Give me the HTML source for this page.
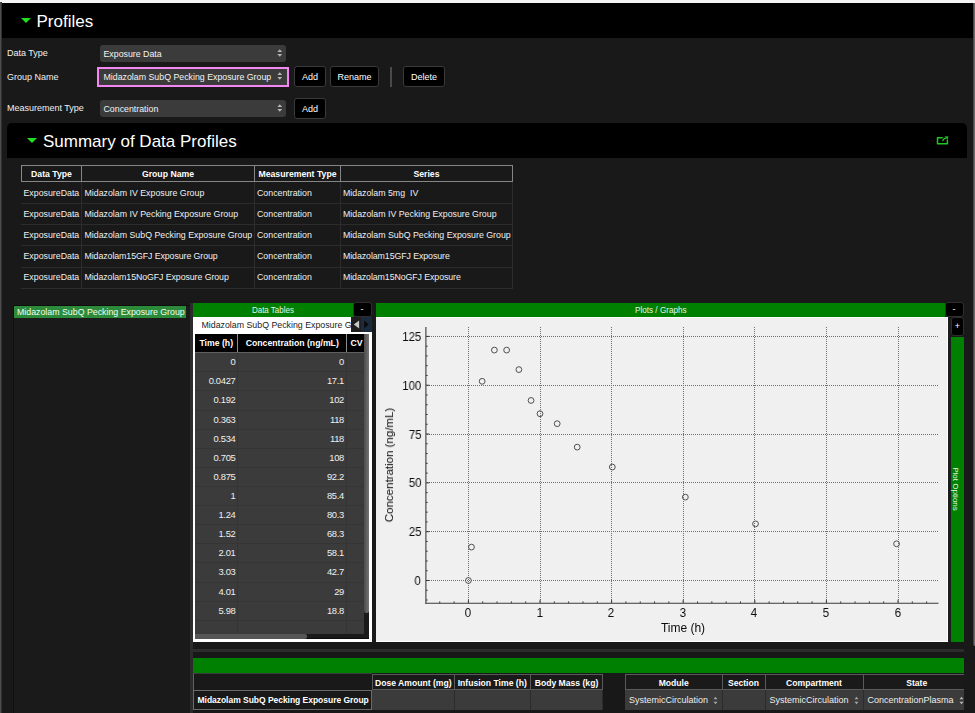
<!DOCTYPE html>
<html><head><meta charset="utf-8"><title>Profiles</title>
<style>
html,body{margin:0;padding:0;}
body{width:975px;height:713px;overflow:hidden;background:#191919;position:relative;font-family:"Liberation Sans",sans-serif;font-size:9px;color:#f2f2f2;}
div,span{position:absolute;box-sizing:border-box;white-space:nowrap;}
.hdr{background:#000;}
.h1{font-size:17px;color:#fff;line-height:20px;}
.tri{width:0;height:0;border-left:5px solid transparent;border-right:5px solid transparent;border-top:5px solid #1fe01f;}
.lab{left:7px;font-size:9px;line-height:12px;color:#f0f0f0;}
.sel{left:100px;width:186px;height:17px;background:#3b3b3b;border-radius:3px;line-height:18.4px;padding-left:3.5px;font-size:8.8px;color:#f4f4f4;}
.arr{right:3.7px;top:4.3px;width:5.5px;height:8px;}
.btn{background:#000;border:1px solid #3a3a3a;border-radius:3px;height:21px;line-height:20.5px;text-align:center;font-size:9px;color:#fff;}
.sth{top:165px;height:17px;border:1px solid #858585;border-left:none;line-height:16.5px;text-align:center;font-weight:bold;font-size:8.7px;color:#fff;background:#191919;}
.sr{left:0;width:975px;}
.sr span{top:0;font-size:8.8px;color:#f0f0f0;}
.svl{width:1px;background:#2c2c2c;top:182px;height:106px;}
.shl{height:1px;background:#2c2c2c;left:21px;width:492px;}
.green{background:#008000;}
.gh{font-size:8.7px;line-height:14.6px;text-align:center;color:#e8f5e8;}
.mb{background:#000;border:1px solid #2e2e2e;border-radius:3px;color:#fff;text-align:center;font-size:9px;}
.dr{left:195px;width:170px;height:19px;line-height:19.4px;font-size:9.4px;letter-spacing:-0.3px;color:#f0f0f0;}
.dr .c1{right:129.5px;top:0;}
.dr .c2{right:21px;top:0;}
.dd{left:195px;width:169px;height:1px;background:#353535;}
.dth{top:334px;height:18px;line-height:18.6px;font-weight:bold;color:#fff;font-size:8.7px;text-align:center;}
.yl{will-change:transform;right:553.8px;font-size:12.2px;line-height:14px;color:#0c0c0c;text-align:right;transform:scaleX(0.94);transform-origin:100% 50%;}
.xl{will-change:transform;top:606px;width:40px;text-align:center;font-size:12.2px;line-height:14px;color:#0c0c0c;transform:scaleX(0.94);}
.bth{top:673.5px;height:16.5px;background:#1a1a1a;border:1px solid #5a5a5a;border-left:none;line-height:16.5px;text-align:center;font-weight:bold;font-size:8.6px;color:#fff;}
.bc{top:690px;height:19.5px;background:#3b3b3b;line-height:21px;font-size:9px;color:#eee;padding-left:4px;border-right:1px solid #2c2c2c;}
</style></head><body>
<!-- top white strip -->
<div style="left:0;top:0;width:975px;height:2.5px;background:#f4f4f4"></div>
<div style="left:0;top:2px;width:2px;height:711px;background:linear-gradient(90deg,#5c5c5c,#202020)"></div>
<!-- Profiles header -->
<div class="hdr" style="left:2px;top:2.5px;width:971px;height:35px"></div>
<div class="tri" style="left:20.5px;top:17.5px"></div>
<div class="h1" style="left:36.5px;top:11.5px">Profiles</div>
<!-- right scrollbar -->
<div style="left:973px;top:2.5px;width:2px;height:643px;background:linear-gradient(90deg,#3a3a3a,#7a7a7a);border-radius:0 0 0 2px"></div>

<div class="lab" style="top:47px">Data Type</div>
<div class="lab" style="top:70.5px">Group Name</div>
<div class="lab" style="top:102px">Measurement Type</div>

<div class="sel" style="top:45px">Exposure Data<svg class="arr" style="position:absolute" viewBox="0 0 5.5 8"><path d="M0.3 3 L2.75 0.2 L5.2 3 Z M0.3 5 L2.75 7.8 L5.2 5 Z" fill="#b4b4b4"/></svg></div>
<div style="left:96.5px;top:67px;width:192px;height:20px;border:2px solid #f486f4;background:#3b3b3b"></div>
<div class="sel" style="top:67.8px;background:transparent">Midazolam SubQ Pecking Exposure Group<svg class="arr" style="position:absolute" viewBox="0 0 5.5 8"><path d="M0.3 3 L2.75 0.2 L5.2 3 Z M0.3 5 L2.75 7.8 L5.2 5 Z" fill="#b4b4b4"/></svg></div>
<div class="sel" style="top:100px">Concentration<svg class="arr" style="position:absolute" viewBox="0 0 5.5 8"><path d="M0.3 3 L2.75 0.2 L5.2 3 Z M0.3 5 L2.75 7.8 L5.2 5 Z" fill="#b4b4b4"/></svg></div>

<div class="btn" style="left:294px;top:66px;width:32px">Add</div>
<div class="btn" style="left:330px;top:66px;width:49px">Rename</div>
<div style="left:390px;top:66.5px;width:2px;height:20px;background:#4a4a4a"></div>
<div class="btn" style="left:403px;top:66px;width:42px">Delete</div>
<div class="btn" style="left:294px;top:98px;width:32px">Add</div>

<!-- Summary header -->
<div class="hdr" style="left:7px;top:123px;width:960px;height:35px;border-radius:5px 5px 0 0"></div>
<div class="tri" style="left:27px;top:138px"></div>
<div class="h1" style="left:43px;top:132px">Summary of Data Profiles</div>
<svg style="position:absolute;left:935px;top:135px" width="15" height="11" viewBox="935 135 15 11"><path d="M942.2 137.7 H937.5 V143.7 H947.4 V140.4" fill="none" stroke="#1fc81f" stroke-width="1.5" stroke-linejoin="round" stroke-linecap="round"/><path d="M942.7 141.2 Q943 138.7 946 138.2" fill="none" stroke="#1fc81f" stroke-width="1.2"/><path d="M944.6 136.3 L948.3 136.5 L947.8 139.9 Z" fill="#1fc81f"/></svg>

<!-- Summary table -->
<div class="sth" style="left:21px;width:61px;border-left:1px solid #8a8a8a">Data Type</div>
<div class="sth" style="left:82px;width:173px">Group Name</div>
<div class="sth" style="left:255px;width:86px">Measurement Type</div>
<div class="sth" style="left:341px;width:172px">Series</div>
<div class="sr" style="top:182.6px;height:21.4px;line-height:21.4px"><span style="left:23.5px">ExposureData</span><span style="left:84.5px;">Midazolam IV Exposure Group</span><span style="left:257px">Concentration</span><span style="left:343px;">Midazolam 5mg&nbsp; IV</span></div>
<div class="sr" style="top:203.6px;height:21.4px;line-height:21.4px"><span style="left:23.5px">ExposureData</span><span style="left:84.5px;">Midazolam IV Pecking Exposure Group</span><span style="left:257px">Concentration</span><span style="left:343px;">Midazolam IV Pecking Exposure Group</span></div>
<div class="sr" style="top:225px;height:21.4px;line-height:21.4px"><span style="left:23.5px">ExposureData</span><span style="left:84.5px;">Midazolam SubQ Pecking Exposure Group</span><span style="left:257px">Concentration</span><span style="left:343px;">Midazolam SubQ Pecking Exposure Group</span></div>
<div class="sr" style="top:246.3px;height:21.4px;line-height:21.4px"><span style="left:23.5px">ExposureData</span><span style="left:84.5px;letter-spacing:-0.08px;">Midazolam15GFJ Exposure Group</span><span style="left:257px">Concentration</span><span style="left:343px;letter-spacing:-0.08px;">Midazolam15GFJ Exposure</span></div>
<div class="sr" style="top:267.2px;height:21.4px;line-height:21.4px"><span style="left:23.5px">ExposureData</span><span style="left:84.5px;letter-spacing:-0.08px;">Midazolam15NoGFJ Exposure Group</span><span style="left:257px">Concentration</span><span style="left:343px;letter-spacing:-0.08px;">Midazolam15NoGFJ Exposure</span></div>
<div class="svl" style="left:81px"></div><div class="svl" style="left:254px"></div><div class="svl" style="left:340px"></div><div class="svl" style="left:512px"></div>
<div class="shl" style="top:203px"></div><div class="shl" style="top:224px"></div><div class="shl" style="top:245px"></div><div class="shl" style="top:267px"></div><div class="shl" style="top:288px"></div>

<!-- left list panel -->
<div style="left:13px;top:305px;width:177px;height:409px;background:#1a1a1a;border-left:1px solid #0f0f0f;border-top:1px solid #0f0f0f"></div>
<div style="left:190px;top:303px;width:3px;height:410px;background:#2b2b2b"></div>
<div style="left:14px;top:306px;width:172px;height:12px;background:#2b8b3a;line-height:13.4px;padding-left:3px;font-size:8.8px;color:#f4fff4">Midazolam SubQ Pecking Exposure Group</div>

<!-- Data tables panel -->
<div style="left:193px;top:317px;width:179px;height:325px;background:#fff"></div>
<div class="green gh" style="left:193px;top:303px;width:161px;height:14px"><span style="position:static;display:inline-block;transform:scaleX(0.92) translateX(-1px)">Data Tables</span></div>
<div class="mb" style="left:353px;top:302px;width:19px;height:15px;line-height:13px;text-indent:-1px">-</div>
<div style="left:201.5px;top:318px;width:149px;height:15px;overflow:hidden;line-height:15px;font-size:8.8px;color:#222">Midazolam SubQ Pecking Exposure Group</div>
<div style="left:350.5px;top:317px;width:10.5px;height:15px;background:#1e1e1e"></div>
<div style="left:361px;top:317px;width:11px;height:15px;background:#1b2a3c"></div>
<svg style="position:absolute;left:350px;top:317px" width="22" height="15" viewBox="350 317 22 15"><path d="M359.1 320.6 L353.8 324.5 L359.1 328.4 Z" fill="#c8c8c8"/><path d="M364.2 320.6 L368.7 324.5 L364.2 328.4 Z" fill="#0a0a0a"/></svg>
<!-- table body -->
<div style="left:195px;top:334px;width:174px;height:305.3px;background:#000"></div>
<div style="left:195px;top:352px;width:169px;height:282px;background:#3b3b3b"></div>
<div class="dth" style="left:195px;width:42.5px">Time (h)</div>
<div class="dth" style="left:238px;width:108.5px">Concentration (ng/mL)</div>
<div class="dth" style="left:347px;width:18px;text-align:left;padding-left:3.5px;overflow:hidden">CV</div>
<div style="left:237px;top:334px;width:1px;height:18px;background:#8a8a8a"></div>
<div style="left:346px;top:334px;width:1px;height:18px;background:#8a8a8a"></div><div style="left:195px;top:352px;width:169px;height:1px;background:#606060"></div>
<div class="dd" style="top:371px"></div>
<div class="dd" style="top:390px"></div>
<div class="dd" style="top:410px"></div>
<div class="dd" style="top:429px"></div>
<div class="dd" style="top:448px"></div>
<div class="dd" style="top:467px"></div>
<div class="dd" style="top:486px"></div>
<div class="dd" style="top:505px"></div>
<div class="dd" style="top:524px"></div>
<div class="dd" style="top:543px"></div>
<div class="dd" style="top:562px"></div>
<div class="dd" style="top:582px"></div>
<div class="dd" style="top:601px"></div>
<div class="dd" style="top:620px"></div>
<div style="left:237px;top:353px;width:1px;height:281px;background:#343434"></div>
<div style="left:346px;top:353px;width:1px;height:281px;background:#343434"></div>
<div class="dr" style="top:352px"><span class="c1">0</span><span class="c2">0</span></div>
<div class="dr" style="top:371px"><span class="c1">0.0427</span><span class="c2">17.1</span></div>
<div class="dr" style="top:390px"><span class="c1">0.192</span><span class="c2">102</span></div>
<div class="dr" style="top:410px"><span class="c1">0.363</span><span class="c2">118</span></div>
<div class="dr" style="top:429px"><span class="c1">0.534</span><span class="c2">118</span></div>
<div class="dr" style="top:448px"><span class="c1">0.705</span><span class="c2">108</span></div>
<div class="dr" style="top:467px"><span class="c1">0.875</span><span class="c2">92.2</span></div>
<div class="dr" style="top:486px"><span class="c1">1</span><span class="c2">85.4</span></div>
<div class="dr" style="top:505px"><span class="c1">1.24</span><span class="c2">80.3</span></div>
<div class="dr" style="top:524px"><span class="c1">1.52</span><span class="c2">68.3</span></div>
<div class="dr" style="top:543px"><span class="c1">2.01</span><span class="c2">58.1</span></div>
<div class="dr" style="top:562px"><span class="c1">3.03</span><span class="c2">42.7</span></div>
<div class="dr" style="top:582px"><span class="c1">4.01</span><span class="c2">29</span></div>
<div class="dr" style="top:601px"><span class="c1">5.98</span><span class="c2">18.8</span></div>
<!-- scrollbars -->
<div style="left:364px;top:334px;width:5px;height:300px;background:#1a1a1a"></div>
<div style="left:364px;top:334px;width:5px;height:278.5px;border-radius:0 0 2px 2px;background:linear-gradient(90deg,#4c4c4c,#747474)"></div>

<div style="left:195px;top:634px;width:174px;height:5.3px;background:#1a1a1a;border-bottom:1px solid #0c0c0c"></div><div style="left:195px;top:634px;width:112px;height:4.5px;background:#565656;border-radius:0 2px 2px 0"></div>

<!-- gap -->
<div style="left:372px;top:302px;width:4px;height:340px;background:#1a1a1a"></div>
<!-- Plot panel -->
<div style="left:376px;top:317px;width:572px;height:325px;background:#f0f0f0;border-top:1px solid #fff;border-right:1px solid #fff;border-bottom:1px solid #fff"></div>
<div class="green gh" style="left:376px;top:303px;width:569px;height:14px"><span style="position:static;display:inline-block;transform:scaleX(0.94) translateX(0.3px)">Plots / Graphs</span></div>
<div class="mb" style="left:945px;top:302px;width:19px;height:15px;line-height:13px;text-indent:-1px">-</div>
<div style="left:948px;top:317px;width:3px;height:325px;background:#1c1c1c"></div>
<div class="mb" style="left:951px;top:317px;width:13px;height:19px;line-height:17px;font-size:9px">+</div>
<div class="green" style="left:951px;top:336.5px;width:13px;height:305.5px"></div>
<div style="left:954.8px;top:489.3px;width:0;height:0;font-size:8px;color:#eaf6e0"><div style="left:0;top:0;transform:translate(-50%,-50%) rotate(90deg);line-height:10px">Plot Options</div></div>
<svg width="975" height="713" style="position:absolute;left:0;top:0">
<line x1="427" y1="580.5" x2="938" y2="580.5" stroke="#6e6e6e" stroke-width="1" stroke-dasharray="1,1" shape-rendering="crispEdges"/>
<line x1="427" y1="531.5" x2="938" y2="531.5" stroke="#6e6e6e" stroke-width="1" stroke-dasharray="1,1" shape-rendering="crispEdges"/>
<line x1="427" y1="482.5" x2="938" y2="482.5" stroke="#6e6e6e" stroke-width="1" stroke-dasharray="1,1" shape-rendering="crispEdges"/>
<line x1="427" y1="434.5" x2="938" y2="434.5" stroke="#6e6e6e" stroke-width="1" stroke-dasharray="1,1" shape-rendering="crispEdges"/>
<line x1="427" y1="385.5" x2="938" y2="385.5" stroke="#6e6e6e" stroke-width="1" stroke-dasharray="1,1" shape-rendering="crispEdges"/>
<line x1="427" y1="336.5" x2="938" y2="336.5" stroke="#6e6e6e" stroke-width="1" stroke-dasharray="1,1" shape-rendering="crispEdges"/>
<line x1="468.5" y1="327" x2="468.5" y2="603" stroke="#6e6e6e" stroke-width="1" stroke-dasharray="1,1" shape-rendering="crispEdges"/>
<line x1="540.5" y1="327" x2="540.5" y2="603" stroke="#6e6e6e" stroke-width="1" stroke-dasharray="1,1" shape-rendering="crispEdges"/>
<line x1="611.5" y1="327" x2="611.5" y2="603" stroke="#6e6e6e" stroke-width="1" stroke-dasharray="1,1" shape-rendering="crispEdges"/>
<line x1="683.5" y1="327" x2="683.5" y2="603" stroke="#6e6e6e" stroke-width="1" stroke-dasharray="1,1" shape-rendering="crispEdges"/>
<line x1="754.5" y1="327" x2="754.5" y2="603" stroke="#6e6e6e" stroke-width="1" stroke-dasharray="1,1" shape-rendering="crispEdges"/>
<line x1="826.5" y1="327" x2="826.5" y2="603" stroke="#6e6e6e" stroke-width="1" stroke-dasharray="1,1" shape-rendering="crispEdges"/>
<line x1="898.5" y1="327" x2="898.5" y2="603" stroke="#6e6e6e" stroke-width="1" stroke-dasharray="1,1" shape-rendering="crispEdges"/>
<line x1="425.9" y1="327" x2="425.9" y2="603.7" stroke="#3a3a3a" stroke-width="1.1"/>
<line x1="425.4" y1="603.2" x2="938.5" y2="603.2" stroke="#3a3a3a" stroke-width="1.1"/>
<line x1="425.9" y1="600.03" x2="427.7" y2="600.03" stroke="#3a3a3a" stroke-width="1"/>
<line x1="425.9" y1="590.26" x2="427.7" y2="590.26" stroke="#3a3a3a" stroke-width="1"/>
<line x1="425.9" y1="580.50" x2="429.4" y2="580.50" stroke="#3a3a3a" stroke-width="1"/>
<line x1="425.9" y1="570.74" x2="427.7" y2="570.74" stroke="#3a3a3a" stroke-width="1"/>
<line x1="425.9" y1="560.97" x2="427.7" y2="560.97" stroke="#3a3a3a" stroke-width="1"/>
<line x1="425.9" y1="551.21" x2="427.7" y2="551.21" stroke="#3a3a3a" stroke-width="1"/>
<line x1="425.9" y1="541.44" x2="427.7" y2="541.44" stroke="#3a3a3a" stroke-width="1"/>
<line x1="425.9" y1="531.68" x2="429.4" y2="531.68" stroke="#3a3a3a" stroke-width="1"/>
<line x1="425.9" y1="521.92" x2="427.7" y2="521.92" stroke="#3a3a3a" stroke-width="1"/>
<line x1="425.9" y1="512.15" x2="427.7" y2="512.15" stroke="#3a3a3a" stroke-width="1"/>
<line x1="425.9" y1="502.39" x2="427.7" y2="502.39" stroke="#3a3a3a" stroke-width="1"/>
<line x1="425.9" y1="492.62" x2="427.7" y2="492.62" stroke="#3a3a3a" stroke-width="1"/>
<line x1="425.9" y1="482.86" x2="429.4" y2="482.86" stroke="#3a3a3a" stroke-width="1"/>
<line x1="425.9" y1="473.10" x2="427.7" y2="473.10" stroke="#3a3a3a" stroke-width="1"/>
<line x1="425.9" y1="463.33" x2="427.7" y2="463.33" stroke="#3a3a3a" stroke-width="1"/>
<line x1="425.9" y1="453.57" x2="427.7" y2="453.57" stroke="#3a3a3a" stroke-width="1"/>
<line x1="425.9" y1="443.80" x2="427.7" y2="443.80" stroke="#3a3a3a" stroke-width="1"/>
<line x1="425.9" y1="434.04" x2="429.4" y2="434.04" stroke="#3a3a3a" stroke-width="1"/>
<line x1="425.9" y1="424.28" x2="427.7" y2="424.28" stroke="#3a3a3a" stroke-width="1"/>
<line x1="425.9" y1="414.51" x2="427.7" y2="414.51" stroke="#3a3a3a" stroke-width="1"/>
<line x1="425.9" y1="404.75" x2="427.7" y2="404.75" stroke="#3a3a3a" stroke-width="1"/>
<line x1="425.9" y1="394.98" x2="427.7" y2="394.98" stroke="#3a3a3a" stroke-width="1"/>
<line x1="425.9" y1="385.22" x2="429.4" y2="385.22" stroke="#3a3a3a" stroke-width="1"/>
<line x1="425.9" y1="375.46" x2="427.7" y2="375.46" stroke="#3a3a3a" stroke-width="1"/>
<line x1="425.9" y1="365.69" x2="427.7" y2="365.69" stroke="#3a3a3a" stroke-width="1"/>
<line x1="425.9" y1="355.93" x2="427.7" y2="355.93" stroke="#3a3a3a" stroke-width="1"/>
<line x1="425.9" y1="346.16" x2="427.7" y2="346.16" stroke="#3a3a3a" stroke-width="1"/>
<line x1="425.9" y1="336.40" x2="429.4" y2="336.40" stroke="#3a3a3a" stroke-width="1"/>
<line x1="439.76" y1="603.2" x2="439.76" y2="601.4000000000001" stroke="#3a3a3a" stroke-width="1"/>
<line x1="454.08" y1="603.2" x2="454.08" y2="601.4000000000001" stroke="#3a3a3a" stroke-width="1"/>
<line x1="468.40" y1="603.2" x2="468.40" y2="599.7" stroke="#3a3a3a" stroke-width="1"/>
<line x1="482.72" y1="603.2" x2="482.72" y2="601.4000000000001" stroke="#3a3a3a" stroke-width="1"/>
<line x1="497.04" y1="603.2" x2="497.04" y2="601.4000000000001" stroke="#3a3a3a" stroke-width="1"/>
<line x1="511.36" y1="603.2" x2="511.36" y2="601.4000000000001" stroke="#3a3a3a" stroke-width="1"/>
<line x1="525.68" y1="603.2" x2="525.68" y2="601.4000000000001" stroke="#3a3a3a" stroke-width="1"/>
<line x1="540.00" y1="603.2" x2="540.00" y2="599.7" stroke="#3a3a3a" stroke-width="1"/>
<line x1="554.32" y1="603.2" x2="554.32" y2="601.4000000000001" stroke="#3a3a3a" stroke-width="1"/>
<line x1="568.64" y1="603.2" x2="568.64" y2="601.4000000000001" stroke="#3a3a3a" stroke-width="1"/>
<line x1="582.96" y1="603.2" x2="582.96" y2="601.4000000000001" stroke="#3a3a3a" stroke-width="1"/>
<line x1="597.28" y1="603.2" x2="597.28" y2="601.4000000000001" stroke="#3a3a3a" stroke-width="1"/>
<line x1="611.60" y1="603.2" x2="611.60" y2="599.7" stroke="#3a3a3a" stroke-width="1"/>
<line x1="625.92" y1="603.2" x2="625.92" y2="601.4000000000001" stroke="#3a3a3a" stroke-width="1"/>
<line x1="640.24" y1="603.2" x2="640.24" y2="601.4000000000001" stroke="#3a3a3a" stroke-width="1"/>
<line x1="654.56" y1="603.2" x2="654.56" y2="601.4000000000001" stroke="#3a3a3a" stroke-width="1"/>
<line x1="668.88" y1="603.2" x2="668.88" y2="601.4000000000001" stroke="#3a3a3a" stroke-width="1"/>
<line x1="683.20" y1="603.2" x2="683.20" y2="599.7" stroke="#3a3a3a" stroke-width="1"/>
<line x1="697.52" y1="603.2" x2="697.52" y2="601.4000000000001" stroke="#3a3a3a" stroke-width="1"/>
<line x1="711.84" y1="603.2" x2="711.84" y2="601.4000000000001" stroke="#3a3a3a" stroke-width="1"/>
<line x1="726.16" y1="603.2" x2="726.16" y2="601.4000000000001" stroke="#3a3a3a" stroke-width="1"/>
<line x1="740.48" y1="603.2" x2="740.48" y2="601.4000000000001" stroke="#3a3a3a" stroke-width="1"/>
<line x1="754.80" y1="603.2" x2="754.80" y2="599.7" stroke="#3a3a3a" stroke-width="1"/>
<line x1="769.12" y1="603.2" x2="769.12" y2="601.4000000000001" stroke="#3a3a3a" stroke-width="1"/>
<line x1="783.44" y1="603.2" x2="783.44" y2="601.4000000000001" stroke="#3a3a3a" stroke-width="1"/>
<line x1="797.76" y1="603.2" x2="797.76" y2="601.4000000000001" stroke="#3a3a3a" stroke-width="1"/>
<line x1="812.08" y1="603.2" x2="812.08" y2="601.4000000000001" stroke="#3a3a3a" stroke-width="1"/>
<line x1="826.40" y1="603.2" x2="826.40" y2="599.7" stroke="#3a3a3a" stroke-width="1"/>
<line x1="840.72" y1="603.2" x2="840.72" y2="601.4000000000001" stroke="#3a3a3a" stroke-width="1"/>
<line x1="855.04" y1="603.2" x2="855.04" y2="601.4000000000001" stroke="#3a3a3a" stroke-width="1"/>
<line x1="869.36" y1="603.2" x2="869.36" y2="601.4000000000001" stroke="#3a3a3a" stroke-width="1"/>
<line x1="883.68" y1="603.2" x2="883.68" y2="601.4000000000001" stroke="#3a3a3a" stroke-width="1"/>
<line x1="898.00" y1="603.2" x2="898.00" y2="599.7" stroke="#3a3a3a" stroke-width="1"/>
<line x1="912.32" y1="603.2" x2="912.32" y2="601.4000000000001" stroke="#3a3a3a" stroke-width="1"/>
<line x1="926.64" y1="603.2" x2="926.64" y2="601.4000000000001" stroke="#3a3a3a" stroke-width="1"/>
<circle cx="468.40" cy="580.50" r="2.9" fill="none" stroke="#505050" stroke-width="1"/>
<circle cx="471.46" cy="547.11" r="2.9" fill="none" stroke="#505050" stroke-width="1"/>
<circle cx="482.15" cy="381.31" r="2.9" fill="none" stroke="#505050" stroke-width="1"/>
<circle cx="494.39" cy="350.07" r="2.9" fill="none" stroke="#505050" stroke-width="1"/>
<circle cx="506.63" cy="350.07" r="2.9" fill="none" stroke="#505050" stroke-width="1"/>
<circle cx="518.88" cy="369.60" r="2.9" fill="none" stroke="#505050" stroke-width="1"/>
<circle cx="531.05" cy="400.45" r="2.9" fill="none" stroke="#505050" stroke-width="1"/>
<circle cx="540.00" cy="413.73" r="2.9" fill="none" stroke="#505050" stroke-width="1"/>
<circle cx="557.18" cy="423.69" r="2.9" fill="none" stroke="#505050" stroke-width="1"/>
<circle cx="577.23" cy="447.12" r="2.9" fill="none" stroke="#505050" stroke-width="1"/>
<circle cx="612.32" cy="467.04" r="2.9" fill="none" stroke="#505050" stroke-width="1"/>
<circle cx="685.35" cy="497.12" r="2.9" fill="none" stroke="#505050" stroke-width="1"/>
<circle cx="755.52" cy="523.87" r="2.9" fill="none" stroke="#505050" stroke-width="1"/>
<circle cx="896.57" cy="543.79" r="2.9" fill="none" stroke="#505050" stroke-width="1"/>
</svg>
<div class="yl" style="top:574px">0</div>
<div class="yl" style="top:525px">25</div>
<div class="yl" style="top:476px">50</div>
<div class="yl" style="top:428px">75</div>
<div class="yl" style="top:379px">100</div>
<div class="yl" style="top:330px">125</div>
<div class="xl" style="left:448.0px">0</div>
<div class="xl" style="left:519.6px">1</div>
<div class="xl" style="left:591.2px">2</div>
<div class="xl" style="left:662.8px">3</div>
<div class="xl" style="left:734.4px">4</div>
<div class="xl" style="left:806.0px">5</div>
<div class="xl" style="left:877.6px">6</div>
<div style="will-change:transform;left:643px;top:620.5px;width:80px;text-align:center;font-size:12px;line-height:14px;color:#0c0c0c">Time (h)</div>
<div style="left:389px;top:465px;width:0;height:0"><div style="will-change:transform;left:0;top:0;transform:translate(-50%,-50%) rotate(-90deg);font-size:11.5px;line-height:14px;color:#0c0c0c">Concentration (ng/mL)</div></div>

<!-- bottom panel -->
<div style="left:193px;top:642px;width:771px;height:71px;background:#181818"></div>
<div style="left:193px;top:648.5px;width:771px;height:3.5px;background:#2c2c2c"></div>
<div class="green" style="left:193px;top:658px;width:771px;height:14.6px"></div>
<div style="left:193px;top:673px;width:179px;height:17.5px;background:#191919;border-left:1px solid #606060;border-top:1px solid #3a3a3a"></div>
<div class="bth" style="left:372px;width:82.5px;border-left:1px solid #5a5a5a">Dose Amount (mg)</div>
<div class="bth" style="left:454.5px;width:76.5px">Infusion Time (h)</div>
<div class="bth" style="left:531px;width:72px">Body Mass (kg)</div>
<div style="left:193px;top:690px;width:179px;height:20px;background:#191919;border:1px solid #6a6a6a;line-height:19.6px;padding-left:3.5px;font-weight:bold;font-size:8.5px;letter-spacing:-0.03px;color:#fff">Midazolam SubQ Pecking Exposure Group</div>
<div class="bc" style="left:372px;width:82.5px"></div>
<div class="bc" style="left:454.5px;width:76.5px"></div>
<div class="bc" style="left:531px;width:72px"></div>

<div class="bth" style="left:625px;width:97.5px;border-left:1px solid #5a5a5a">Module</div>
<div class="bth" style="left:722.5px;width:43px">Section</div>
<div class="bth" style="left:765.5px;width:98px">Compartment</div>
<div class="bth" style="left:863.5px;width:100.5px;padding-left:6px;border-right:none">State</div>
<div class="bc" style="left:625px;width:97.5px">SystemicCirculation<svg style="position:absolute;left:88px;top:5.5px" width="5" height="9" viewBox="0 0 5 9"><path d="M0.5 3.2 L2.5 0.8 L4.5 3.2 Z M0.5 5.8 L2.5 8.2 L4.5 5.8 Z" fill="#a6a6a6"/></svg></div>
<div class="bc" style="left:722.5px;width:43px"></div>
<div class="bc" style="left:765.5px;width:98px">SystemicCirculation<svg style="position:absolute;left:88px;top:5.5px" width="5" height="9" viewBox="0 0 5 9"><path d="M0.5 3.2 L2.5 0.8 L4.5 3.2 Z M0.5 5.8 L2.5 8.2 L4.5 5.8 Z" fill="#a6a6a6"/></svg></div>
<div class="bc" style="left:863.5px;width:100px;border-right:none">ConcentrationPlasma<svg style="position:absolute;left:95.5px;top:5.5px" width="5" height="9" viewBox="0 0 5 9"><path d="M0.5 3.2 L2.5 0.8 L4.5 3.2 Z M0.5 5.8 L2.5 8.2 L4.5 5.8 Z" fill="#b8b8b8"/></svg></div>
</body></html>
